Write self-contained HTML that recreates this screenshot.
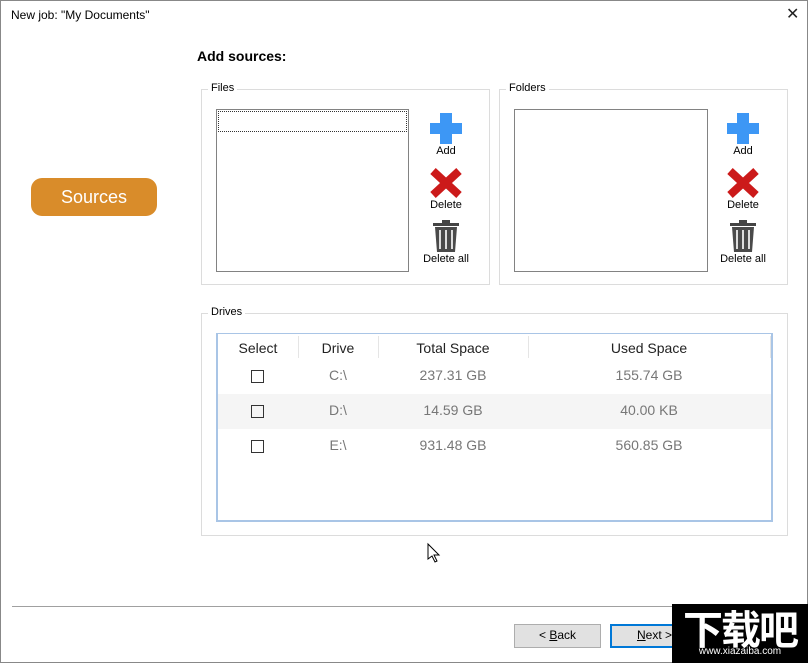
<!DOCTYPE html><html><head><style>
body{margin:0;width:808px;height:663px;background:#fff;font-family:"Segoe UI","Liberation Sans","Noto Sans CJK SC",sans-serif;font-size:12px;color:#000;position:relative;overflow:hidden}
.a{position:absolute}
.gb{position:absolute;border:1px solid #dcdcdc}
.gl{position:absolute;background:#fff;padding:0 3px;font-size:11px;top:-8px;left:6px}
.lb{position:absolute;border:1px solid #828282;background:#fff}
.ic{position:absolute;width:60px;text-align:center;font-size:11px}
.hd{position:absolute;top:6px;font-size:14px;color:#222;text-align:center}
.c{position:absolute;font-size:14px;color:#777;text-align:center}
.cb{position:absolute;width:11px;height:11px;border:1px solid #333}
.btn{position:absolute;height:22px;border:1px solid #adadad;background:#e1e1e1;text-align:center;line-height:21px;font-size:12px}
</style></head><body>
<div class="a" style="left:0;top:0;width:806px;height:661px;border:1px solid #888"></div>
<div class="a" style="left:11px;top:8px;font-size:12px">New job: "My Documents"</div>
<div class="a" style="left:786px;top:4px;font-size:16px;color:#222">✕</div>
<div class="a" style="left:31px;top:178px;width:126px;height:38px;background:#d98c2a;border-radius:11px;color:#fff;font-size:18px;text-align:center;line-height:38px">Sources</div>
<div class="a" style="left:197px;top:48px;font-weight:bold;font-size:14px">Add sources:</div>

<div class="gb" style="left:201px;top:89px;width:287px;height:194px"><span class="gl">Files</span></div>
<div class="lb" style="left:216px;top:109px;width:191px;height:161px"><div style="margin:1px;height:19px;border:1px dotted #333"></div></div>
<div class="gb" style="left:499px;top:89px;width:287px;height:194px"><span class="gl">Folders</span></div>
<div class="lb" style="left:514px;top:109px;width:192px;height:161px"></div>

<svg class="a" style="left:0;top:0" width="808" height="663">
<g id="ic"><rect x="440" y="113" width="12" height="31" fill="#3d97f5"/><rect x="430" y="123" width="32" height="11" fill="#3d97f5"/>
<path d="M433 171 L459 195 M459 171 L433 195" stroke="#cc1a1a" stroke-width="8"/>
<rect x="433" y="223" width="26" height="3" fill="#444"/><rect x="442" y="220" width="8" height="3" fill="#444"/>
<path d="M435 227 h22 l-2 25 h-18 z" fill="#4a4a4a"/><path d="M440 230 v19 M446 230 v19 M452 230 v19" stroke="#ddd" stroke-width="2"/></g>
<use href="#ic" x="297"/>
<path d="M428 544 v15 l4 -3 l3 6 l2 -1 l-3 -6 h5 z" fill="#fff" stroke="#000" stroke-width="1"/>
</svg>
<div class="ic" style="left:416px;top:145px">Add</div><div class="ic" style="left:416px;top:199px">Delete</div><div class="ic" style="left:416px;top:253px">Delete all</div>
<div class="ic" style="left:713px;top:145px">Add</div><div class="ic" style="left:713px;top:199px">Delete</div><div class="ic" style="left:713px;top:253px">Delete all</div>

<div class="gb" style="left:201px;top:313px;width:585px;height:221px"><span class="gl">Drives</span></div>
<div class="a" style="left:216px;top:333px;width:553px;height:186px;border:2px solid #a9c5e6;border-top-width:1px">
<div class="a" style="left:0;top:60px;width:553px;height:35px;background:#f5f5f5"></div>
<div class="a" style="left:80px;top:2px;height:22px;border-left:1px solid #e5e5e5"></div>
<div class="a" style="left:160px;top:2px;height:22px;border-left:1px solid #e5e5e5"></div>
<div class="a" style="left:310px;top:2px;height:22px;border-left:1px solid #e5e5e5"></div>
<div class="a" style="left:552px;top:2px;height:22px;border-left:1px solid #e5e5e5"></div>
<div class="hd" style="left:0;width:80px">Select</div><div class="hd" style="left:80px;width:80px">Drive</div>
<div class="hd" style="left:160px;width:150px">Total Space</div><div class="hd" style="left:310px;width:242px">Used Space</div>
<div class="cb" style="left:33px;top:36px"></div><div class="c" style="left:80px;width:80px;top:33px">C:\</div><div class="c" style="left:160px;width:150px;top:33px">237.31 GB</div><div class="c" style="left:310px;width:242px;top:33px">155.74 GB</div>
<div class="cb" style="left:33px;top:71px"></div><div class="c" style="left:80px;width:80px;top:68px">D:\</div><div class="c" style="left:160px;width:150px;top:68px">14.59 GB</div><div class="c" style="left:310px;width:242px;top:68px">40.00 KB</div>
<div class="cb" style="left:33px;top:106px"></div><div class="c" style="left:80px;width:80px;top:103px">E:\</div><div class="c" style="left:160px;width:150px;top:103px">931.48 GB</div><div class="c" style="left:310px;width:242px;top:103px">560.85 GB</div>
</div>

<div class="a" style="left:12px;top:606px;width:784px;border-top:1px solid #a0a0a0"></div>
<div class="btn" style="left:514px;top:624px;width:85px">&lt; <u>B</u>ack</div>
<div class="btn" style="left:610px;top:624px;width:85px;border:2px solid #0078d7;height:20px;line-height:19px"><u>N</u>ext &gt;</div>
<div class="a" style="left:672px;top:604px;width:136px;height:59px;background:#000;color:#fff">
<div style="font-size:40px;font-weight:bold;line-height:46px;text-align:center;letter-spacing:-2px;font-family:'Noto Sans CJK SC',sans-serif">下载吧</div>
<div style="font-size:10px;text-align:center;margin-top:-4px">www.xiazaiba.com</div></div>
</body></html>
